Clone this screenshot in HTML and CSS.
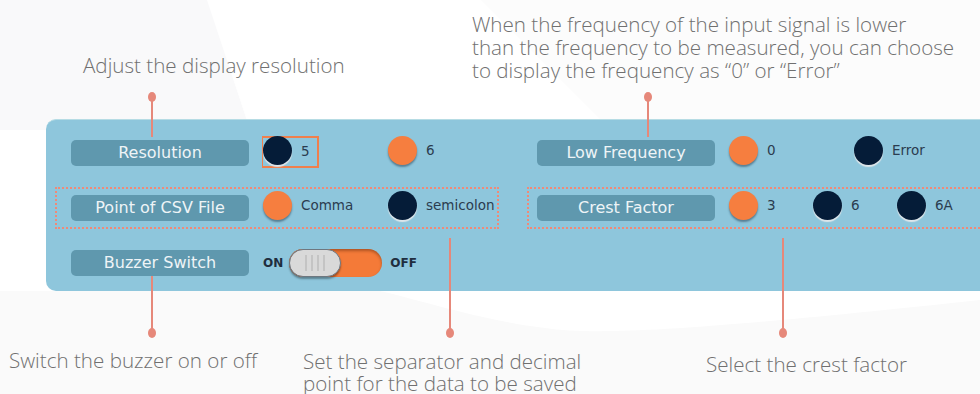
FILE: index.html
```html
<!DOCTYPE html>
<html lang="en">

<head>
    <meta charset="UTF-8">
    <meta name="viewport" content="width=device-width, initial-scale=1.0">
    <title>Settings overview</title>
    <link rel="stylesheet" href="styles.css">
</head>

<body>
    <svg class="backdrop" width="980" height="394" viewBox="0 0 980 394">
        <polygon points="0,0 207,0 250,130 0,130" fill="#f9f9fa" />
        <polygon points="481,0 980,0 980,119 600,119" fill="#fcfcfc" />
        <path d="M0,291 L380,291 C420,300 480,320 545,328 C600,336 700,330 980,300 L980,394 L0,394 Z" fill="#fafafa" />
    </svg>

    <div class="panel">
        <div class="column left">
            <div class="row">
                <span class="pill">Resolution</span>
                <span class="option wide selected"><i class="dot dark"></i>5</span>
                <span class="option wide"><i class="dot orange"></i>6</span>
            </div>
            <div class="row boxed">
                <span class="pill">Point of CSV File</span>
                <span class="option wide"><i class="dot orange"></i>Comma</span>
                <span class="option wide"><i class="dot dark"></i>semicolon</span>
            </div>
            <div class="row">
                <span class="pill">Buzzer Switch</span>
                <span class="switch-label">ON</span>
                <span class="switch">
                    <span class="knob"><b></b><b></b><b></b><b></b></span>
                </span>
                <span class="switch-label">OFF</span>
            </div>
        </div>

        <div class="column right">
            <div class="row">
                <span class="pill">Low Frequency</span>
                <span class="option wide"><i class="dot orange"></i>0</span>
                <span class="option wide"><i class="dot dark"></i>Error</span>
            </div>
            <div class="row boxed">
                <span class="pill">Crest Factor</span>
                <span class="option narrow"><i class="dot orange"></i>3</span>
                <span class="option narrow"><i class="dot dark"></i>6</span>
                <span class="option narrow"><i class="dot dark"></i>6A</span>
            </div>
        </div>
    </div>

    <!-- callouts -->
    <p class="note note-resolution">Adjust the display resolution</p>
    <p class="note note-frequency">When the frequency of the input signal is lower<br>than the frequency to be measured, you can choose<br>to display the frequency as “0” or “Error”</p>
    <p class="note note-buzzer">Switch the buzzer on or off</p>
    <p class="note note-csv">Set the separator and decimal<br>point for the data to be saved</p>
    <p class="note note-crest">Select the crest factor</p>

    <span class="stem down" style="left: 151px; top: 97px; height: 40px;"></span>
    <span class="stem down" style="left: 647px; top: 97px; height: 40px;"></span>
    <span class="stem up" style="left: 151px; top: 276px; height: 57px;"></span>
    <span class="stem up" style="left: 449px; top: 238px; height: 95px;"></span>
    <span class="stem up" style="left: 782px; top: 238px; height: 95px;"></span>
</body>

</html>
```

FILE: styles.css
```css
body {
    margin: 0;
    width: 980px;
    height: 394px;
    position: relative;
    overflow: hidden;
    background-color: #fff;
    font-family: "DejaVu Sans", sans-serif;
}

.backdrop {
    position: absolute;
    left: 0;
    top: 0;
    z-index: 0;
}

.panel {
    position: relative;
    z-index: 1;
    margin: 119px 0 0 46px;
    height: 172px;
    box-sizing: border-box;
    padding: 12px 0 0 9px;
    background-color: #8ec6dc;
    border-top: 1px solid #b6dce4;
    border-radius: 10px 0 0 10px;
    display: flex;
    gap: 28px;
}

.column {
    display: flex;
    flex-direction: column;
    gap: 13px;
}

.column.left {
    width: 444px;
    flex-shrink: 0;
}

.column.right {
    flex: 1;
}

.row {
    height: 42px;
    box-sizing: border-box;
    border: 2px dotted transparent;
    padding-left: 14px;
    display: flex;
    align-items: center;
}

.column.right .row {
    padding-left: 8px;
}

.row.boxed {
    border-color: #ef8a78;
}

.pill {
    width: 178px;
    height: 26px;
    margin-right: 14px;
    border-radius: 5px;
    background-color: #5f98ae;
    color: #eef4f7;
    font-size: 16px;
    line-height: 26px;
    text-align: center;
    flex-shrink: 0;
}

.option {
    display: flex;
    align-items: center;
    gap: 9px;
    height: 29px;
    margin-top: -6px;
    font-size: 13.5px;
    color: #2b3c4f;
    white-space: nowrap;
    box-sizing: border-box;
    flex-shrink: 0;
}

.option.wide {
    width: 125px;
}

.option.narrow {
    width: 84px;
}

.option.selected {
    width: 57px;
    height: 32px;
    margin: -2px 69px 0 -1px;
    border: 2px solid #f07f4c;
    border-left-width: 1px;
    align-items: flex-start;
    line-height: 26px;
}

.dot {
    width: 29px;
    height: 29px;
    border-radius: 50%;
    flex-shrink: 0;
}

.option.selected .dot {
    margin-top: -2px;
}

.dot.dark {
    background-color: #051c38;
    box-shadow: 0 2px 1px #dfe6ea;
}

.dot.orange {
    background-color: #f67e3f;
    box-shadow: 0 2px 2px rgba(20, 40, 60, 0.45);
}

.switch-label {
    font-size: 12px;
    font-weight: bold;
    color: #1f2e3f;
}

.switch {
    width: 93px;
    height: 28px;
    margin: 0 8px 0 6px;
    border-radius: 14px;
    background-color: #f47a38;
    box-shadow: inset 0 2px 3px rgba(90, 40, 10, 0.45);
    display: flex;
}

.knob {
    width: 52px;
    height: 28px;
    box-sizing: border-box;
    border-radius: 14px;
    background-color: #d9d9d9;
    border: 1px solid #6e7780;
    box-shadow: 0 2px 2px rgba(0, 0, 0, 0.35);
    display: flex;
    justify-content: center;
    align-items: center;
    gap: 4px;
}

.knob b {
    width: 2px;
    height: 16px;
    background-color: #c4c4c4;
}

.note {
    position: absolute;
    z-index: 2;
    margin: 0;
    font-family: "Open Sans", sans-serif;
    font-weight: 300;
    font-size: 20.6px;
    line-height: 22px;
    color: #707070;
    white-space: nowrap;
}

.note-resolution {
    left: 83px;
    top: 54px;
}

.note-frequency {
    left: 472px;
    top: 13px;
    line-height: 23px;
}

.note-buzzer {
    left: 9px;
    top: 349px;
}

.note-csv {
    left: 303px;
    top: 350px;
}

.note-crest {
    left: 706px;
    top: 353px;
}

.stem {
    position: absolute;
    z-index: 2;
    width: 2px;
    background-color: #e6887a;
}

.stem::after {
    content: "";
    position: absolute;
    left: -3px;
    width: 8px;
    height: 10px;
    border-radius: 50%;
    background-color: #e6887a;
}

.stem.down::after {
    top: -5px;
}

.stem.up::after {
    bottom: -5px;
}
```
